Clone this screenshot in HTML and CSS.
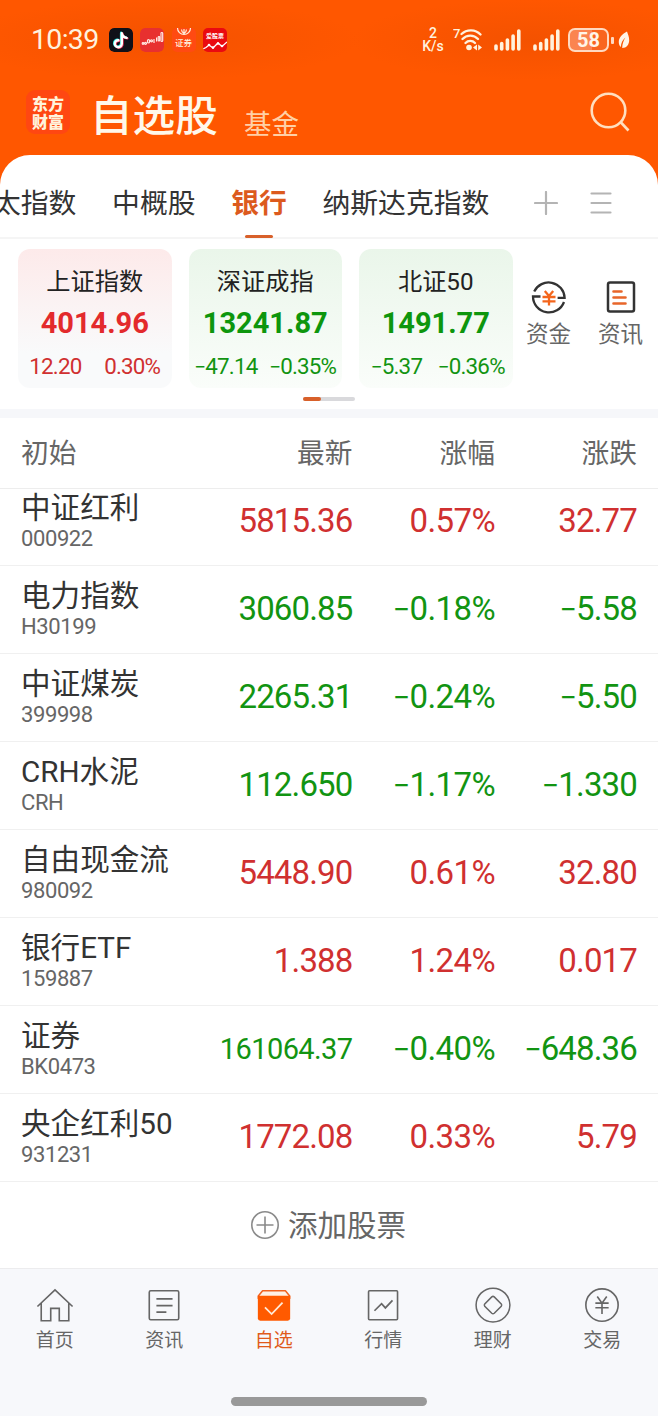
FILE: index.html
```html
<!DOCTYPE html>
<html lang="zh-CN">
<head>
<meta charset="utf-8">
<title>自选股</title>
<link rel="stylesheet" href="styles.css">
</head>
<body>
<div class="app">
  <header class="header">
    <div class="status">
      <span class="clock">10:39</span>
      <span class="apps">
        <svg class="app-icon" viewBox="0 0 24 24"><rect width="24" height="24" rx="5" fill="#101018"/><g fill="none" stroke-width="2.400" stroke-linecap="round"><path d="M12.100 4.700v10.400a3.500 3.500 0 1 1-3.400-3.400M12.100 5c.6 2.600 2.300 4 4.900 4.400" stroke="#25e5e0"/><path d="M13.500 5.700v10.400a3.500 3.500 0 1 1-3.400-3.400M13.500 6c.6 2.600 2.300 4 4.900 4.400" stroke="#ef315c"/><path d="M12.800 5.200v10.400a3.500 3.500 0 1 1-3.400-3.400M12.800 5.500c.6 2.600 2.300 4 4.900 4.400" stroke="#fff"/></g></svg>
        <svg class="app-icon" viewBox="0 0 24 24"><rect width="24" height="24" rx="5" fill="#e8302f"/><g fill="none" stroke="#ffe9e2" stroke-width="1.200"><circle cx="3" cy="15.500" r=".8"/><circle cx="5.500" cy="15.300" r="1"/><rect x="7.500" y="11.500" width="2" height="3.500" rx="1"/><circle cx="11.500" cy="12.800" r="1"/><path d="M14 11v4M16.600 9.500v4"/><rect x="18.200" y="8.500" width="1.500" height="4.500" rx=".7"/><rect x="21" y="4.500" width="1.700" height="9" rx=".8"/></g></svg>
        <span class="app-icon broker">
          <svg viewBox="0 0 24 10"><path d="M5.500 0a6.500 6.500 0 0 0 13 0M12 1v4.500M9.500 1.500c0 2 1 3 2.500 4 1.500-1 2.500-2 2.500-4" fill="none" stroke="#fff0dc" stroke-width="1.200"/></svg>
          <span>证券</span>
        </span>
        <span class="app-icon stocks">
          <span>爱股票</span>
          <svg viewBox="0 0 24 10"><path d="M0 8 3 6.500 6 4l4 3 5-5 4 3.500L24 1" fill="none" stroke="#fff" stroke-width="1.300"/><g fill="#fff"><circle cx="6" cy="4" r="1.300"/><circle cx="10" cy="6.600" r="1.300"/><circle cx="15" cy="2.500" r="1.300"/><circle cx="19" cy="5" r="1.300"/></g></svg>
        </span>
      </span>
      <span class="net"><span>2</span><span>K/s</span></span>
      <svg class="wifi" width="29" height="26" viewBox="0 0 29 26"><text x="0" y="10.500" class="wifi-gen">7</text><g fill="none" stroke="#fff2de" stroke-width="2.300" stroke-linecap="round"><path d="M8.500 7a13.500 13.500 0 0 1 19 .5M9.500 12a10.500 10.500 0 0 1 15.500 0M12.500 16a6.500 6.500 0 0 1 9.500 0"/></g><circle cx="16" cy="20.500" r="2.800" fill="#fff2de"/><path d="M24 17.500v6L20 20.500zM25.200 17.500v6L29 20.500z" fill="#fff2de"/></svg>
      <svg class="signal" width="27" height="22" viewBox="0 0 27 22"><path d="M2 17v3M7.700 14.500V20M13.400 11V20M19.100 7v13M24.800 2v18" stroke="#fff2de" stroke-width="3.600" stroke-linecap="round"/></svg>
      <svg class="signal second" width="27" height="22" viewBox="0 0 27 22"><path d="M2 17v3M7.700 14.500V20M13.400 11V20M19.100 7v13M24.800 2v18" stroke="#fff2de" stroke-width="3.600" stroke-linecap="round"/></svg>
      <span class="battery">58</span>
      <span class="battery-tip"></span>
      <svg class="leaf" width="12" height="18" viewBox="0 0 12 18"><path d="M9 .5C4.500 3 .5 6.500.8 11.500c.1 2 1 3.500 2 4.500C3 11.500 5 8.500 7.500 6.500 5.500 9.500 4.300 13 4.200 17c4.500 0 6.800-3.500 7-7.500C11.300 6 10 3.500 9 .5z" fill="#fff5e6"/></svg>
    </div>
    <div class="title-bar">
      <div class="logo"><span>东方</span><span>财富</span></div>
      <h1 class="title">自选股</h1>
      <span class="subtitle">基金</span>
      <svg class="search" width="42" height="42" viewBox="0 0 42 42"><g fill="none" stroke="#ffdfbf" stroke-width="2.600"><circle cx="19.500" cy="19.500" r="16.800"/><path d="m31.500 31 8 8.500"/></g></svg>
    </div>
  </header>

  <main class="panel">
    <nav class="tabs">
      <span class="tab">太指数</span>
      <span class="tab">中概股</span>
      <span class="tab active">银行</span>
      <span class="tab">纳斯达克指数</span>
      <svg class="plus" width="24" height="24" viewBox="0 0 24 24"><path d="M12 1v22M1 12h22" stroke="#b4b4b4" stroke-width="2.200" stroke-linecap="round"/></svg>
      <svg class="menu" width="22" height="22" viewBox="0 0 22 22"><path d="M1.500 1.500h19M1.500 11h19M1.500 20.500h19" stroke="#b4b4b4" stroke-width="2.200" stroke-linecap="round"/></svg>
    </nav>

    <section class="indices">
      <article class="index up">
        <div class="index-name">上证指数</div>
        <div class="index-value">4014.96</div>
        <div class="index-change"><span>12.20</span><span>0.30%</span></div>
      </article>
      <article class="index down">
        <div class="index-name">深证成指</div>
        <div class="index-value">13241.87</div>
        <div class="index-change"><span><i>−</i>47.14</span><span><i>−</i>0.35%</span></div>
      </article>
      <article class="index down third">
        <div class="index-name">北证50</div>
        <div class="index-value">1491.77</div>
        <div class="index-change"><span><i>−</i>5.37</span><span><i>−</i>0.36%</span></div>
      </article>
      <div class="tool">
        <svg width="36" height="36" viewBox="0 0 36 36"><g fill="none" stroke="#333" stroke-width="2.300"><path d="M3.200 12.500A16 16 0 0 1 33.600 18.800h-7M33 23A16 16 0 0 1 2 17.500h7.500"/></g><path d="m13.800 12 4.200 5 4.200-5M11.500 18h13M11.500 22.300h13M18 17v9.500" fill="none" stroke="#f4661c" stroke-width="2.300"/></svg>
        <span>资金</span>
      </div>
      <div class="tool news">
        <svg width="36" height="36" viewBox="0 0 36 36"><rect x="5" y="3.500" width="26" height="29" rx="2" fill="none" stroke="#333" stroke-width="2.500"/><path d="M10.500 12.500h8M10.500 18.500h12M10.500 24.500h12" stroke="#e8662a" stroke-width="2.600" stroke-linecap="round"/></svg>
        <span>资讯</span>
      </div>
    </section>
    <div class="pager"><span></span></div>

    <section class="table">
      <div class="row head"><span class="stock">初始</span><span class="latest">最新</span><span class="pct">涨幅</span><span class="diff">涨跌</span></div>
      <div class="list">
        <div class="row up"><div class="stock"><b>中证红利</b><small>000922</small></div><span class="latest">5815.36</span><span class="pct">0.57%</span><span class="diff">32.77</span></div>
        <div class="row down"><div class="stock"><b>电力指数</b><small>H30199</small></div><span class="latest">3060.85</span><span class="pct"><i>−</i>0.18%</span><span class="diff"><i>−</i>5.58</span></div>
        <div class="row down"><div class="stock"><b>中证煤炭</b><small>399998</small></div><span class="latest">2265.31</span><span class="pct"><i>−</i>0.24%</span><span class="diff"><i>−</i>5.50</span></div>
        <div class="row down"><div class="stock"><b>CRH水泥</b><small>CRH</small></div><span class="latest">112.650</span><span class="pct"><i>−</i>1.17%</span><span class="diff"><i>−</i>1.330</span></div>
        <div class="row up"><div class="stock"><b>自由现金流</b><small>980092</small></div><span class="latest">5448.90</span><span class="pct">0.61%</span><span class="diff">32.80</span></div>
        <div class="row up"><div class="stock"><b>银行ETF</b><small>159887</small></div><span class="latest">1.388</span><span class="pct">1.24%</span><span class="diff">0.017</span></div>
        <div class="row down"><div class="stock"><b>证券</b><small>BK0473</small></div><span class="latest long">161064.37</span><span class="pct"><i>−</i>0.40%</span><span class="diff"><i>−</i>648.36</span></div>
        <div class="row up"><div class="stock"><b>央企红利50</b><small>931231</small></div><span class="latest">1772.08</span><span class="pct">0.33%</span><span class="diff">5.79</span></div>
      </div>
    </section>
    <div class="add">
      <svg width="30" height="30" viewBox="0 0 30 30"><g fill="none" stroke="#8a8a8a" stroke-width="1.600"><circle cx="15" cy="15" r="13.200"/><path d="M15 6.500v17M6.500 15h17"/></g></svg>
      <span>添加股票</span>
    </div>
  </main>

  <footer class="bottom">
    <nav class="nav">
      <div class="nav-item"><svg viewBox="0 0 40 40"><path d="M1.500 20.500 20 3l18.500 17.500M5.500 17v18.500h10V22.500h9v13h10V17" fill="none" stroke="#666" stroke-width="1.700"/></svg><span>首页</span></div>
      <div class="nav-item"><svg viewBox="0 0 40 40"><rect x="4.500" y="4" width="31" height="30.500" rx="1.500" fill="none" stroke="#666" stroke-width="1.700"/><path d="M12 12.500h17M12 19.500h17M12 26.500h10.500" stroke="#666" stroke-width="1.800"/></svg><span>资讯</span></div>
      <div class="nav-item active"><svg viewBox="0 0 40 40"><path d="M3.500 9.500 8 4h24l4.500 5.500V12h-33z" fill="#fff0e5" stroke="#f06220" stroke-width="1.600" stroke-linejoin="round"/><path d="M3 9.300h34V33a2.500 2.500 0 0 1-2.500 2.500h-29A2.500 2.500 0 0 1 3 33z" fill="#ff5a00"/><path d="m10.500 21.500 7 7 11.500-12" fill="none" stroke="#ffead8" stroke-width="1.900"/></svg><span>自选</span></div>
      <div class="nav-item"><svg viewBox="0 0 40 40"><rect x="4.800" y="4" width="30.500" height="30.500" rx="1" fill="none" stroke="#666" stroke-width="1.700"/><path d="m11 25 7.500-7.500 4 4.500 7.500-8" fill="none" stroke="#666" stroke-width="1.800"/></svg><span>行情</span></div>
      <div class="nav-item"><svg viewBox="0 0 40 40"><g fill="none" stroke="#666" stroke-width="1.600"><circle cx="20" cy="19" r="17.800"/><path d="M18.700 10.400a2 2 0 0 1 2.600 0l7.400 7.400a2 2 0 0 1 0 2.400l-7.400 7.400a2 2 0 0 1-2.600 0l-7.400-7.400a2 2 0 0 1 0-2.400z"/></g></svg><span>理财</span></div>
      <div class="nav-item"><svg viewBox="0 0 40 40"><g fill="none" stroke="#666" stroke-width="1.700"><circle cx="20" cy="19" r="17"/><path d="m15 10 5 7 5-7M13 17h14M13 21.800h14M20 17v11.500"/></g></svg><span>交易</span></div>
    </nav>
    <div class="home-bar"></div>
  </footer>
</div>
</body>
</html>
```
FILE: styles.css
```css
* { box-sizing: border-box; }
body {
  margin: 0;
  background: #fff;
  font-family: Roboto, "Noto Sans CJK SC", sans-serif;
  color: #333;
}
svg { display: block; flex: none; }
i { font-style: normal; font-size: .92em; }
.app { width: 658px; height: 1416px; display: flex; flex-direction: column; overflow: hidden; background: #ff5700; }

/* Header */
.header { height: 155px; flex: none; }
.status { height: 80px; padding-left: 31px; display: flex; align-items: center; color: #fff2de; background: radial-gradient(ellipse 200px 40px at 160px 40px, #f45200, transparent), radial-gradient(ellipse 180px 40px at 530px 40px, #f45200, transparent); }
.clock { width: 78px; font-size: 28.500px; letter-spacing: -.7px; line-height: 30px; }
.apps { display: flex; gap: 7.300px; width: 313px; }
.app-icon { width: 24px; height: 24px; border-radius: 5px; display: flex; flex-direction: column; align-items: center; overflow: hidden; }
.app-icon span { line-height: 11px; font-weight: 700; white-space: nowrap; }
.app-icon svg { width: 24px; height: 10px; }
.app-icon.broker { background: #ff4a12; }
.app-icon.broker span { font-size: 8.500px; font-weight: 500; }
.app-icon.stocks { background: #ea0a10; padding-top: 2px; }
.app-icon.stocks span { font-size: 6px; color: #fff; }
.net { width: 22px; display: flex; flex-direction: column; align-items: center; font-size: 14px; font-weight: 500; line-height: 13px; }
.wifi { margin: 0 12px 0 9px; }
.wifi-gen { font: 500 13px Roboto, sans-serif; fill: #fff2de; }
.signal { margin-right: 12px; }
.second { margin-right: 8px; }
.battery { width: 41px; height: 24px; border: 2px solid #ffd9c0; border-radius: 7px; background: linear-gradient(90deg, #fb8450 60%, #f9651f 60%); font: 700 20px/20px Roboto, sans-serif; text-align: center; color: #fff5e8; }
.battery-tip { width: 2.500px; height: 7px; margin: 0 4px 0 2px; border-radius: 1px; background: #ffd9c0; }

.title-bar { height: 75px; padding: 0 27px 0 26px; display: flex; align-items: flex-start; }
.logo { width: 44px; height: 44px; margin-top: 10px; padding-top: 4px; border-radius: 9px; background: #ff4712; color: #fff3dc; display: flex; flex-direction: column; align-items: center; font: 900 16px/18px "Noto Sans CJK SC", sans-serif; }
.title { margin: 5px 0 0 20px; width: 135px; font-size: 42.600px; line-height: 62px; font-weight: 500; color: #fff8ea; white-space: nowrap; }
.subtitle { margin-top: 25px; font-size: 27.500px; line-height: 40px; color: #ffd0a6; margin-left: 19px; }
.search { margin: 11px 0 0 auto; }

/* Panel */
.panel { height: 1113px; flex: none; background: #fff; border-radius: 30px 30px 0 0; overflow: hidden; }
.tabs { height: 84px; border-bottom: 2px solid #f5f5f5; display: flex; align-items: center; font-size: 27.800px; white-space: nowrap; }
.tab { height: 83px; line-height: 98px; margin-right: 35.700px; position: relative; }
.tab:first-child { margin-left: -7px; }
.tab.active { color: #dc5a1e; font-weight: 700; }
.tab.active::after { content: ""; position: absolute; left: 14px; bottom: 0; width: 28px; height: 3px; border-radius: 2px; background: #d8602a; }
.plus { margin: 13px 32px 0 9px; }
.menu { margin-top: 13px; }

.indices { height: 149px; padding: 10px 0 0 18px; display: flex; align-items: flex-start; }
.index { width: 153.500px; height: 139px; margin-right: 17px; border-radius: 12px; text-align: center; white-space: nowrap; }
.index.up { background: linear-gradient(#fdeaea, #f9fafb 75%); }
.index.down { background: linear-gradient(#eaf6ea, #fafdfa); }
.index-name { padding-top: 17px; font-size: 24.200px; line-height: 32px; color: #222; }
.index-value { padding-top: 6px; font-size: 29px; line-height: 38px; font-weight: 700; }
.index-change { padding-top: 10px; display: flex; justify-content: space-around; font-size: 22.400px; line-height: 28px; letter-spacing: -.8px; }
.index.third { margin-right: 0; }
.third .index-change { padding-left: 4px; }
.up .index-value { color: #e32a2c; }
.down .index-value { color: #0d960d; }
.up .index-change, .up .latest, .up .pct, .up .diff { color: #d03030; }
.down .index-change, .down .latest, .down .pct, .down .diff { color: #129412; }
.tool { width: 72px; padding-top: 30px; display: flex; flex-direction: column; align-items: center; font-size: 22.500px; line-height: 38px; color: #666; }

.pager { width: 52px; height: 4px; margin: 9px 0 8px 303px; border-radius: 2px; background: #d9d9dc; }
.pager span { display: block; width: 18px; height: 4px; border-radius: 2px; background: #d8602a; }

/* Quote table */
.table { border-top: 9px solid #f6f7fa; }
.row { height: 88px; display: flex; align-items: center; border-bottom: 1px solid #f0f0f0; padding: 0 0 2px 21px; font-size: 33px; letter-spacing: -.85px; white-space: nowrap; }
.stock { width: 161px; letter-spacing: 0; }
.latest, .pct, .diff { text-align: right; }
.latest { width: 170.500px; }
.pct { width: 142.500px; }
.diff { width: 142px; }
.pct { letter-spacing: -.6px; }
.row.head { height: 71px; padding-bottom: 4px; font-size: 27.700px; letter-spacing: 0; color: #666; border-bottom: 1px solid #ededed; }
.head .pct { letter-spacing: 0; }
.list { height: 693px; overflow: hidden; }
.list .row:first-child { margin-top: -11px; }
.stock b { display: block; font-weight: 400; font-size: 29.600px; line-height: 36px; }
.stock small { display: block; font-size: 22px; line-height: 26px; letter-spacing: -.4px; color: #666; }
.latest.long { font-size: 29px; letter-spacing: -.6px; }
.add { height: 85px; padding: 0 2px 3px 0; display: flex; justify-content: center; align-items: center; gap: 8px; font-size: 29.500px; color: #666; }
.add svg { margin-top: 3px; }

/* Bottom navigation */
.bottom { height: 148px; flex: none; background: #f7f8fb; border-top: 1px solid #ececee; }
.nav { height: 128px; display: flex; padding-top: 18px; }
.nav-item { width: 109.500px; display: flex; flex-direction: column; align-items: center; font-size: 19px; line-height: 32px; color: #666; }
.nav-item svg { width: 40px; height: 38px; }
.nav-item.active { color: #e05a1a; }
.home-bar { width: 196px; height: 9px; margin: 0 auto; border-radius: 5px; background: #999; }
```
